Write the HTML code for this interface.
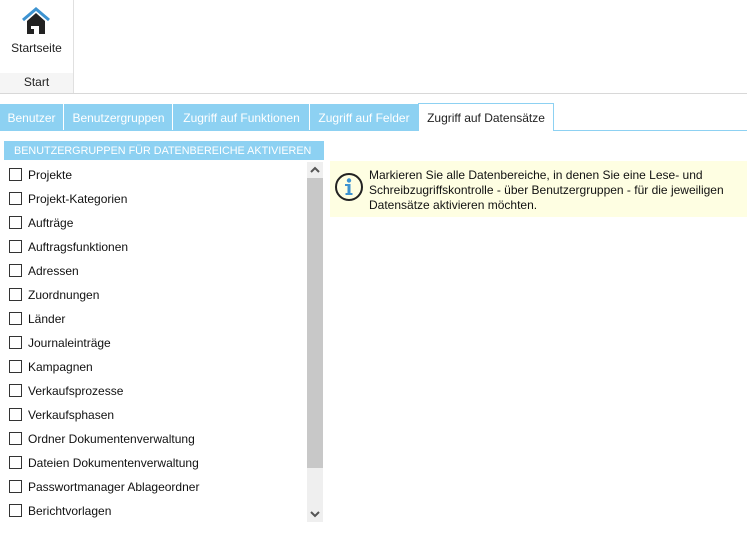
<!DOCTYPE html>
<html><head><meta charset="utf-8"><style>
*{margin:0;padding:0;box-sizing:border-box}
body{width:747px;height:544px;background:#fff;font-family:"Liberation Sans",sans-serif;font-size:12px;color:#222;position:relative;overflow:hidden}
.abs{position:absolute}
.tab{position:absolute;top:104px;height:26px;line-height:29px;color:#fff;font-size:12px;text-align:center;white-space:nowrap}
.item{position:absolute;left:9px;height:14px;font-size:12px;line-height:14px}
.item i{position:absolute;left:0;top:1px;width:13px;height:13px;border:1px solid #333;background:#fff}
.item span{position:absolute;left:19px;top:1px;white-space:nowrap;color:#111}
</style></head><body>
<svg class="abs" style="left:22px;top:7px" width="28" height="28" viewBox="0 0 28 28">
<path d="M1 13 L14 2 L27 13" fill="none" stroke="#3d93d1" stroke-width="3"/>
<path d="M5 14 L14 6 L23 14 L23 27 L17 27 L17 19 L12 19 L12 27 L5 27Z" fill="#222"/>
<rect x="9" y="19" width="3" height="3" fill="#fff"/>
</svg>
<div class="abs" style="left:0;top:41px;width:73px;text-align:center;font-size:12px;color:#222">Startseite</div>
<div class="abs" style="left:0;top:73px;width:73px;height:20px;background:#f5f5f5;text-align:center;line-height:19px;font-size:12px;color:#222">Start</div>
<div class="abs" style="left:73px;top:0;width:1px;height:93px;background:#e0e0e0"></div>
<div class="abs" style="left:0;top:93px;width:747px;height:1px;background:#d8d8d8"></div>

<div class="abs" style="left:0;top:104px;width:418px;height:26px;background:#8dd1f2"></div>
<div class="tab" style="left:0;width:63px">Benutzer</div>
<div class="abs" style="left:63px;top:104px;width:1px;height:26px;background:#fff"></div>
<div class="tab" style="left:64px;width:109px">Benutzergruppen</div>
<div class="abs" style="left:172px;top:104px;width:1px;height:26px;background:#fff"></div>
<div class="tab" style="left:173px;width:137px">Zugriff auf Funktionen</div>
<div class="abs" style="left:309px;top:104px;width:1px;height:26px;background:#fff"></div>
<div class="tab" style="left:310px;width:108px">Zugriff auf Felder</div>
<div class="abs" style="left:0;top:130px;width:747px;height:1px;background:#8dd1f2"></div>
<div class="abs" style="left:418px;top:103px;width:136px;height:28px;background:#fff;border:1px solid #8dd1f2;border-bottom:none;color:#222;text-align:center;line-height:29px;font-size:12px;white-space:nowrap">Zugriff auf Datensätze</div>

<div class="abs" style="left:4px;top:141px;width:320px;height:19px;background:#8dd1f2;color:#fff;font-size:10.8px;line-height:21px;padding-left:10px;white-space:nowrap;overflow:hidden">BENUTZERGRUPPEN FÜR DATENBEREICHE AKTIVIEREN</div>

<div class="abs" style="left:307px;top:162px;width:16px;height:360px;background:#efefef"></div>
<div class="abs" style="left:307px;top:178px;width:16px;height:290px;background:#c8c8c8"></div>
<svg class="abs" style="left:309px;top:166px" width="12" height="8"><path d="M2 6 L6 2 L10 6" fill="none" stroke="#555" stroke-width="2"/></svg>
<svg class="abs" style="left:309px;top:510px" width="12" height="8"><path d="M2 2 L6 6 L10 2" fill="none" stroke="#555" stroke-width="2"/></svg>

<div class="item" style="top:167px"><i></i><span>Projekte</span></div>
<div class="item" style="top:191px"><i></i><span>Projekt-Kategorien</span></div>
<div class="item" style="top:215px"><i></i><span>Aufträge</span></div>
<div class="item" style="top:239px"><i></i><span>Auftragsfunktionen</span></div>
<div class="item" style="top:263px"><i></i><span>Adressen</span></div>
<div class="item" style="top:287px"><i></i><span>Zuordnungen</span></div>
<div class="item" style="top:311px"><i></i><span>Länder</span></div>
<div class="item" style="top:335px"><i></i><span>Journaleinträge</span></div>
<div class="item" style="top:359px"><i></i><span>Kampagnen</span></div>
<div class="item" style="top:383px"><i></i><span>Verkaufsprozesse</span></div>
<div class="item" style="top:407px"><i></i><span>Verkaufsphasen</span></div>
<div class="item" style="top:431px"><i></i><span>Ordner Dokumentenverwaltung</span></div>
<div class="item" style="top:455px"><i></i><span>Dateien Dokumentenverwaltung</span></div>
<div class="item" style="top:479px"><i></i><span>Passwortmanager Ablageordner</span></div>
<div class="item" style="top:503px"><i></i><span>Berichtvorlagen</span></div>

<div class="abs" style="left:330px;top:161px;width:417px;height:56px;background:#fefee2"></div>
<svg class="abs" style="left:334px;top:172px" width="30" height="30" viewBox="0 0 30 30">
<circle cx="15" cy="15" r="13" fill="none" stroke="#222" stroke-width="2"/>
<circle cx="15" cy="8.5" r="2.2" fill="#3d93d1"/>
<path d="M11 12 H16.5 V21 H18.5 V23 H11.5 V21 H13.5 V14 H11Z" fill="#3d93d1"/>
</svg>
<div class="abs" style="left:369px;top:168px;width:370px;font-size:12px;line-height:15px;color:#111">Markieren Sie alle Datenbereiche, in denen Sie eine Lese- und Schreibzugriffskontrolle - über Benutzergruppen - für die jeweiligen Datensätze aktivieren möchten.</div>
</body></html>
